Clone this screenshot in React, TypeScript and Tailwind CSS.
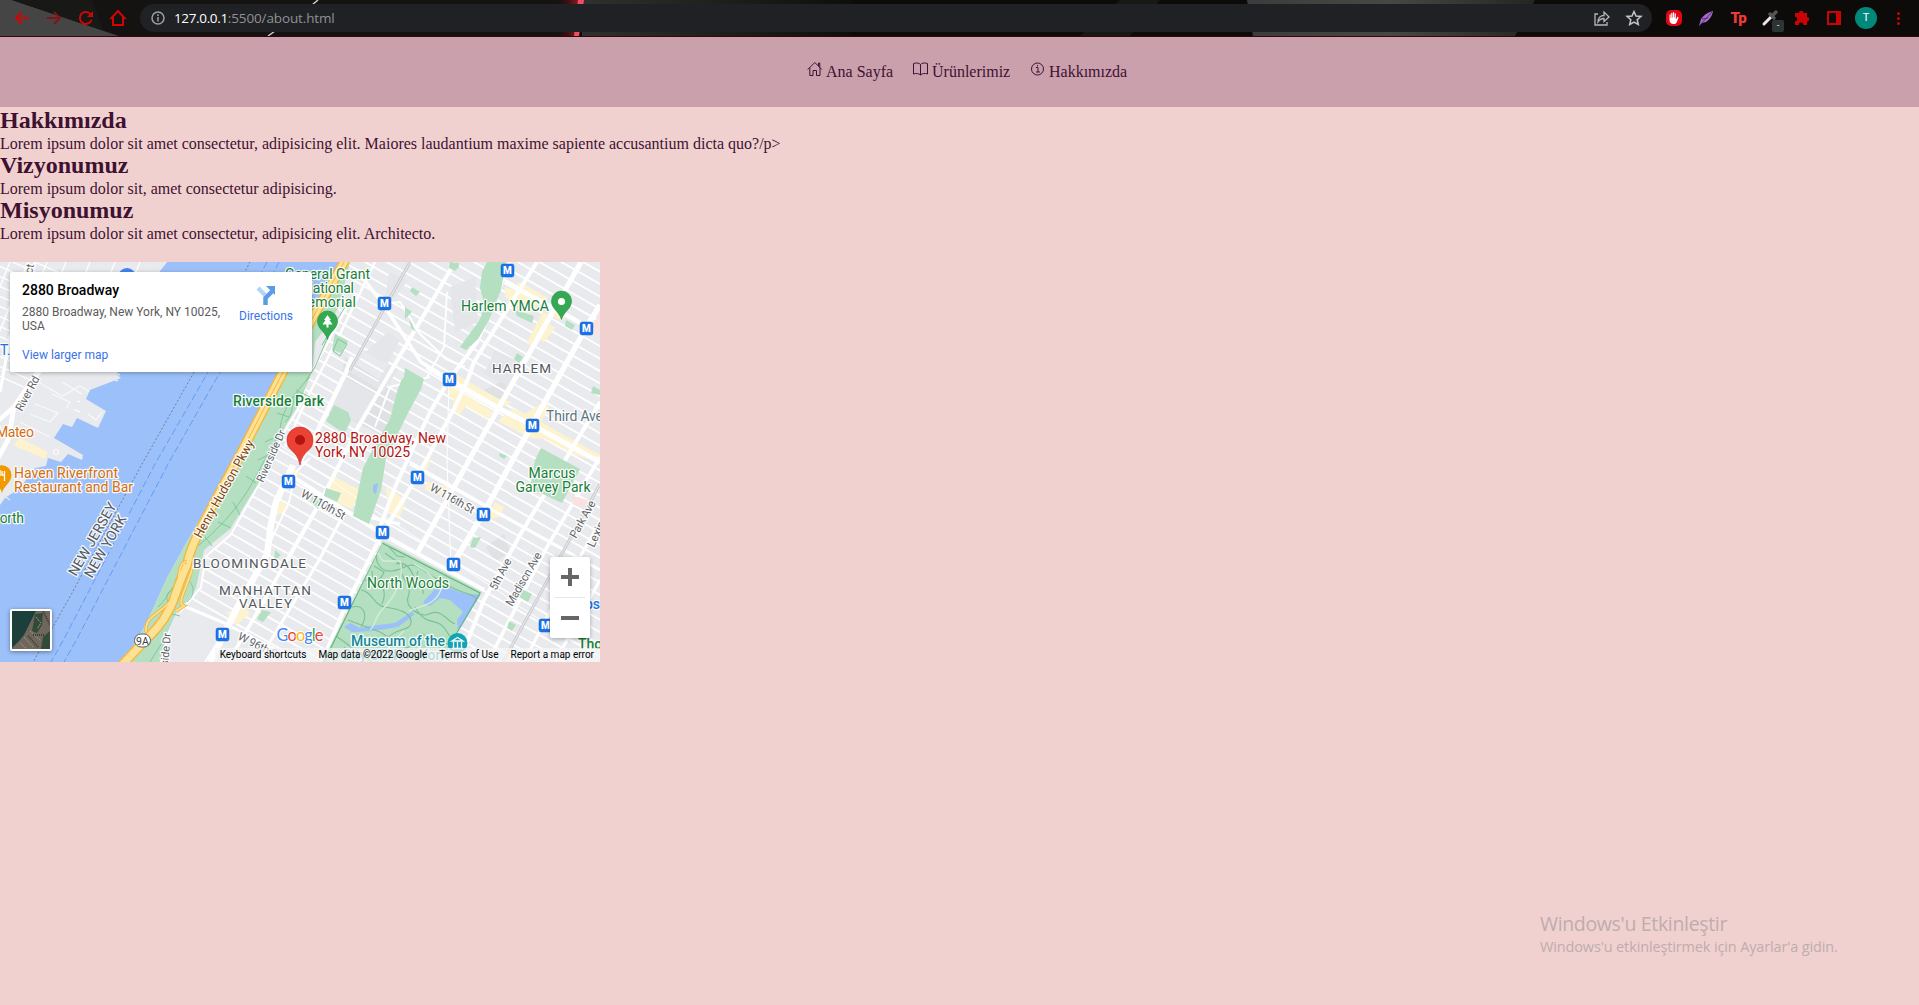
import React from 'react';
import { IoHandLeft } from 'react-icons/io5';

const cityStreets = Array.from({ length: 66 }, (_, i) => -330 + i * 10.8);

const stations: [number, number][] = [
  [384.5, 41.5], [507.5, 8.5], [586.5, 66.5], [449.5, 117.5], [532.5, 163.5], [288.5, 219.5], [417.5, 215.5],
  [483.5, 252.5], [382.5, 270.5], [453.5, 302.5], [344.5, 340.5], [222.5, 372.5], [545.5, 363.5],
];

const avenues: [string, number][] = [
  ['M300 200L318 168L346 110L352 95', 4.5],
  ['M293 203L276 240L271 262L267 293L240 340L210 400', 6.5],
  ['M310 196L296 210L289 240L240 345L205 400', 1.8],
  ['M290 293L322 237L357 167L408 80L455 0', 4],
  ['M322 237L290 293L240 380L228 400', 3.5],
  ['M400 262L345 250L318 300L300 330L258 400', 3],
  ['M322 400L345 345L382 272L417 215L455 145L468 117L474 100L537 0', 4],
  ['M380 265L395 225L430 150L449 118L477 80L487 57L503 17L510 0', 4],
  ['M418 290L468 200L577 7L581 0', 5],
  ['M448 310L483 252L532 163L586 66L600 43', 5.5],
  ['M459 400L484 338L520 273L573 185L600 140', 4],
  ['M492 392L547 285L600 195', 3.5],
  ['M524 400L560 330L600 260', 3],
  ['M555 400L600 318', 3],
  ['M362 15L383 42L421 100L449 118', 3.5],
  ['M383 42L400 40L420 72L446 97L465 105', 2.2],
  ['M447 30L444 85L427 115', 1.8],
  ['M449 118L447 200L451 305', 1],
  ['M350 38L327 80L305 120L300 142L278 178L262 215L230 272L205 294L200 325L184 344L170 360L160 400', 4],
  ['M375 0L340 72L310 130L285 185', 2.5],
  ['M375 165L390 125L430 115', 2],
  ['M270 176L380 252L500 330L520 345L600 395', 1],
  ['M427 105L449 118L500 147L532 163L600 200', 5],
  ['M410 202L600 308', 3],
  ['M290 213L387 275L484 328', 4],
  ['M184 344L222 360L300 400', 3],
  ['M505 20L570 55L600 72', 4.5],
];

function Label({ x, y, size = 14, fill, children, anchor = 'start', rotate = 0, length, weight = 400 }: {
  x: number; y: number; size?: number; fill: string; children: React.ReactNode;
  anchor?: 'start' | 'middle' | 'end'; rotate?: number; length?: number; weight?: number;
}) {
  return (
    <text x={x} y={y} fontSize={size} fill={fill} textAnchor={anchor} fontWeight={weight}
      textLength={length} transform={rotate ? `rotate(${rotate} ${x} ${y})` : undefined}
      stroke="#ffffff" strokeWidth="2.6" strokeOpacity="0.9" strokeLinejoin="round" paintOrder="stroke">
      {children}
    </text>
  );
}

function CityMap() {
  const highway = 'M121 404L157 366C175 345 176 325 187 303C190 285 198 270 240 193L283 110L317 48L347 -5';
  const green = '#188038';
  return (
    <svg width="600" height="400" viewBox="0 0 600 400" className="block" fontFamily="Roboto, sans-serif">
      <defs>
        <clipPath id="manhattan">
          <path d="M342 0H600V400H160L168 370L184 344L200 325L205 294L230 272L262 215L278 178L300 142L305 120L327 80Z" />
        </clipPath>
        <clipPath id="central">
          <path d="M383 280L482 330L440 400H322Z" />
        </clipPath>
      </defs>
      <rect width="600" height="400" fill="#e8eaed" />

      {/* New Jersey streets */}
      <g stroke="#fff" fill="none" strokeWidth="1.3">
        {Array.from({ length: 14 }, (_, i) => <path key={i} d={`M-10 ${-20 + i * 10}L80 ${20 + i * 10}`} />)}
        {[10, 28, 47, 66, 90, 115, 140].map((x) => <path key={x} d={`M${x} 0L${x - 45} 110`} />)}
        <path d="M35 0L25 40L10 75L0 130" strokeWidth="3" />
        <path d="M44 100L14 145L8 178L-4 200M14 145L-3 160" strokeWidth="4.5" />
      </g>
      <path d="M40 108L17 142L10 180L60 190L84 120H125L130 108Z" fill="#e8eaed" />
      <path d="M42 106L14 145L9 176L-2 196" stroke="#fff" strokeWidth="4.5" fill="none" />
      <g stroke="#f8f9fa" fill="none" strokeWidth="1.2">
        <path d="M37 119L62 134L80 124L90 130M62 120L82 132M35 142L58 151L50 160L30 152M52 132L70 140L66 147M20 160L50 175M88 152L96 158L102 150" />
        <circle cx="56" cy="190" r="2.5" />
      </g>
      <path d="M13 183L20 176L48 190L45 197Z" fill="#fdf3cf" />

      {/* Hudson river */}
      <path d="M168 -1L160 9L145 70L116 112L121 116L90 128L86 137L106 149L98 166L77 156L72 165L63 162L54 176L83 193L82 198L68 192L61 200L48 196L46 204L35 206L20 226L5 236L0 243V400H124L147 360L167 316L184 285L197 262L240 190L283 107L315 44L343 -1Z" fill="#9cc0f9" />
      <path d="M101 113L118 119M108 107L120 113M0 231L10 238" stroke="#e8eaed" strokeWidth="1.4" />
      <path d="M252 -4L193 112L142 202L72 331L32 402" stroke="#6c7f9d" strokeWidth="1" strokeDasharray="2 2" fill="none" />
      <path d="M267 0L207 112L155 202L65 375L50 402M279 0L219 112L168 202L78 375L63 402" stroke="#659cf0" strokeWidth="1" strokeDasharray="7 3" fill="none" />

      {/* Upper Manhattan */}
      <g clipPath="url(#manhattan)">
        <g fill="#dfe1e5">
          <path d="M345 95L375 115L410 140L385 175L335 150ZM480 130L510 115L500 140ZM486 285L504 272L510 290L495 300Z" />
        </g>
        <g transform="rotate(29.7 300 200)" stroke="#fff" strokeWidth="1.8">
          {cityStreets.map((y) => <path key={y} d={`M-60 ${y}H690`} />)}
        </g>
        <g fill="#e4e6e9">
          <path d="M388 70L400 78L378 120L350 104ZM365 90L350 110L383 130L398 108ZM343 115L375 132L360 160L330 150ZM450 25L475 15L478 60L455 70ZM495 88L520 100L508 124L484 112ZM389 10L408 18L395 36L386 32Z" />
        </g>
        <g fill="#fdf3cf">
          <path d="M505 25L540 36L533 50L505 35ZM517 20L524 22L548 36L542 40L516 30ZM550 48L566 54L562 58L550 54ZM543 50L550 53L537 83L526 82ZM550 62L555 66L544 80L539 77ZM450 108L472 122L497 136L512 140L500 146L475 133L448 120ZM448 123L470 135L493 150L488 157L448 134ZM512 146L525 152L542 141L550 143L541 160L580 182L600 193V200L575 193L545 177L530 176L498 159ZM454 136L467 142L460 153L452 148ZM440 178L432 188L428 206L420 212ZM335 215L360 228L352 247L325 235ZM495 240L504 245L500 255L485 258ZM386 225L406 238L400 255L388 250ZM290 205L300 210L294 222L280 218ZM275 235L290 246L270 257ZM246 345L250 352L236 363L226 350ZM427 220L450 225L445 234L425 228Z" />
        </g>
        <g fill="none" stroke="#fff" strokeLinejoin="round">
          {avenues.map(([d, w]) => <path key={d} d={d} strokeWidth={w} />)}
        </g>
        <path d="M350 108L370 72L410 0M503 400L552 310L600 222" fill="none" stroke="#c6c9cd" strokeWidth="3" />
        <path d="M350 108L370 72L410 0M503 400L552 310L600 222" fill="none" stroke="#e2e4e7" strokeWidth="1.4" />
      </g>
      <g fill="#b4dfc1">
        <path d="M487 0H506L501 28L489 58L478 77L466 88L460 85L479 59L485 44L480 26L482 10Z" />
        <path d="M405 106L424 117L421 127L408 151L386 196L381 228L369 262L353 254L363 206L374 185L390 157L397 130L401 119L404 115Z" />
        <path d="M541 186L580 207L562 241L530 226L535 198Z" />
        <path d="M334 143L348 150L351 158L345 171L336 166L326 159ZM450 0L459 1L459 5L455 9L449 6ZM412 25L420 30L416 34L410 29ZM405 45L412 50L405 57ZM409 56L416 70L411 66ZM515 48L534 54L532 61L517 54ZM517 91L523 95L519 101L514 97ZM566 58L575 63L572 68L565 64ZM593 124L600 128V133L591 131ZM473 276L481 275L475 286L470 285ZM522 327L532 332L528 340L519 335ZM313 232L322 238L318 247L311 240ZM326 226L341 231L337 240L324 234ZM262 348L271 350L263 360L257 357ZM275 288L281 293L274 299ZM509 359L516 363L512 369L507 366ZM335 72L348 79L341 91L332 88ZM500 191L507 194L504 197L499 194Z" />
        <path d="M350 0L339 45L330 60L315 80L312 110L299 142L286 163L276 185L258 222L230 267L204 288L196 326L188 338L177 349L167 372L160 400H124L147 360L167 316L184 285L197 262L240 190L283 107L315 44L343 0Z" />
        <path d="M383 279L482 330L440 400H322Z" />
      </g>
      <path d="M373 223L378 221L376 232L373 230Z" fill="#9cc0f9" />
      <path d="M594 62L600 50V75L594 71ZM573 234L588 238L583 246L572 242Z" fill="#fbe1df" />
      <g stroke="#84c79b" strokeWidth="1" fill="none">
        <path d="M310 115C295 130 280 150 280 170L250 225C235 250 215 270 198 284M298 130C290 140 295 152 285 160M265 180L278 174M258 198L270 192M246 214L256 221M233 240L240 253M218 260L231 266M205 275L212 284M175 317C180 330 162 326 168 340M185 315C195 323 196 332 187 340M158 345C164 340 168 332 173 325M145 385L159 371M150 400L165 376M160 349L180 354M330 70L315 105L305 120M345 45L322 83M310 135L296 128M277 151L289 155M338 77L347 82L340 94L333 89Z" />
      </g>

      {/* Central Park */}
      <g clipPath="url(#central)">
        <path d="M425 338L435 327L446 325L463 331L482 333L474 352L465 360L463 374L458 371L457 358L463 350L450 338L440 336L430 344L423 341ZM344 365L350 361L360 366L370 364L395 361L410 351L413 349L414 353L398 365L373 369L352 370Z" fill="#9cc0f9" />
        <g fill="none" stroke="#7cc193" strokeWidth="1.1">
          <path d="M377 287C374 300 380 310 392 309C405 308 408 298 420 306C432 314 443 322 455 327C473 335 480 332 475 345L459 373" />
          <path d="M374 304L384 310C379 322 372 320 372 309M365 318C382 319 388 328 382 342M361 328C372 329 374 344 385 345C398 347 410 350 411 359C412 370 396 365 388 376C381 385 382 394 374 400M352 345C365 342 368 354 361 365M348 358L380 370L406 386L420 400M336 374L372 400M403 303C396 315 414 322 408 335C405 345 420 356 429 352C440 346 446 358 455 362M418 309C414 318 425 324 423 332M385 291L403 304M415 345C427 367 438 353 447 370C450 378 459 374 456 388M391 400C398 385 414 388 422 372L457 386M345 385L334 397" />
          <path d="M382 281L480 331L440 400M382 281L324 400" stroke="#64b37e" />
          <path d="M396 302C406 299 411 307 414 315M389 285L397 294L405 295" />
        </g>
        <path d="M378 291L383 299L400 299C405 315 395 335 382 348C375 355 375 364 370 368M414 302L426 309L442 325C435 345 423 342 409 349M404 369L392 380L380 400" fill="none" stroke="#d3edda" strokeWidth="1.4" />
      </g>

      {/* Henry Hudson Parkway */}
      <g fill="none">
        <path d={highway} stroke="#f6b73c" strokeWidth="10" />
        <path d={highway} stroke="#fde293" strokeWidth="7.2" />
        <path d="M197 273L240 193L283 110L317 48L347 -5" stroke="#f6b73c" strokeWidth="1" />
        <path d="M187 300C174 300 184 325 170 340C155 355 145 355 146 370M193 303C190 320 175 342 184 344L176 349" stroke="#f6b73c" strokeWidth="3.4" />
        <path d="M187 300C174 300 184 325 170 340C155 355 145 355 146 370M193 303C190 320 175 342 184 344L176 349" stroke="#fde293" strokeWidth="1.6" />
        <path d="M157 366C175 345 176 325 187 303" stroke="#fde293" strokeWidth="6.5" />
      </g>

      <circle cx="127" cy="15" r="9" fill="#4285f4" />
      {stations.map(([x, y]) => (
        <g key={`${x}-${y}`}>
          <rect x={x - 6.5} y={y - 6.5} width="13" height="13" rx="2.2" fill="#1a73e8" stroke="#1560c4" strokeWidth=".5" />
          <text x={x} y={y + 3.7} textAnchor="middle" fontSize="10" fontWeight="900" fill="#fff">M</text>
        </g>
      ))}

      <Label x={285} y={17} fill={green} length={85}>General Grant</Label>
      <Label x={303} y={31} fill={green} length={51}>National</Label>
      <Label x={295} y={45} fill={green} length={61}>Memorial</Label>
      <Label x={461} y={49} fill={green} length={88}>Harlem YMCA</Label>
      <Label x={233} y={144} fill={green} length={91} weight={500}>Riverside Park</Label>
      <Label x={552} y={216} fill={green} anchor="middle" length={47}>Marcus</Label>
      <Label x={553} y={230} fill={green} anchor="middle" length={75}>Garvey Park</Label>
      <Label x={367} y={326} fill={green} length={82}>North Woods</Label>
      <Label x={-10} y={261} fill={green} length={34}>North</Label>
      <Label x={0} y={93} fill="#1a73e8">T.</Label>
      <Label x={-4} y={175} fill="#d56e0c" length={38}>Mateo</Label>
      <Label x={14} y={216} fill="#d56e0c" length={104}>Haven Riverfront</Label>
      <Label x={14} y={230} fill="#d56e0c" length={119}>Restaurant and Bar</Label>
      <Label x={315} y={181} fill="#b31412" length={131}>2880 Broadway, New</Label>
      <Label x={315} y={195} fill="#b31412" length={95}>York, NY 10025</Label>
      <Label x={492} y={110.500} size={13.500} fill="#55585d" length={59}>HARLEM</Label>
      <Label x={193} y={306} size={13.500} fill="#55585d" length={113}>BLOOMINGDALE</Label>
      <Label x={219} y={333} size={13.500} fill="#55585d" length={92}>MANHATTAN</Label>
      <Label x={239} y={346} size={13.500} fill="#55585d" length={53}>VALLEY</Label>
      <Label x={546} y={159} fill="#5b7582" length={57}>Third Ave</Label>
      <Label x={76} y={315} size={14} fill="#55585d" rotate={-60} length={82}>NEW JERSEY</Label>
      <Label x={92} y={317} size={14} fill="#55585d" rotate={-60} length={70}>NEW YORK</Label>
      <Label x={201} y={277} size={12.500} fill="#7a4510" rotate={-61} length={110}>Henry Hudson Pkwy</Label>
      <Label x={263} y={221} size={11} fill="#5f6368" rotate={-66} length={56}>Riverside Dr</Label>
      <Label x={166} y={427} size={11} fill="#5f6368" rotate={-85} length={56}>Riverside Dr</Label>
      <Label x={22} y={150} size={11.500} fill="#5f6368" rotate={-62} length={38}>River Rd</Label>
      <Label x={32} y={12} size={11} fill="#5f6368" rotate={-78}>ct</Label>
      <Label x={300} y={234} size={11.500} fill="#5f6368" rotate={29} length={49}>W 110th St</Label>
      <Label x={429} y={228} size={11.500} fill="#5f6368" rotate={29} length={49}>W 116th St</Label>
      <Label x={237} y={377} size={11.500} fill="#5f6368" rotate={27} length={46}>W 96th St</Label>
      <Label x={496} y={329} size={11.500} fill="#5f6368" rotate={-62} length={34}>5th Ave</Label>
      <Label x={512} y={345} size={11.500} fill="#5f6368" rotate={-60} length={60}>Madison Ave</Label>
      <Label x={576} y={277} size={11.500} fill="#5f6368" rotate={-61} length={41}>Park Ave</Label>
      <Label x={594} y={286} size={11.500} fill="#5f6368" rotate={-65}>Lexington</Label>
      <Label x={351} y={384} fill="#12879b" length={94} weight={500}>Museum of the</Label>
      <Label x={342} y={398} fill="#12879b" length={106} weight={500}>City of New York</Label>
      <Label x={578} y={387} fill={green} weight={500}>Thomas</Label>
      <Label x={577} y={347} fill="#1a73e8" weight={500}>ops</Label>

      {/* Place markers */}
      <path d="M327.500 77.500C325 69 317.500 67 317.500 59A10 10 0 0 1 337.500 59C337.500 67 330 69 327.500 77.500Z" fill="#34a853" stroke="#1e8e3e" strokeWidth=".6" />
      <path d="M327.500 53L331 58H329.500L332.500 62.500H328.500V65.500H326.500V62.500H322.500L325.500 58H324Z" fill="#fff" />
      <path d="M561.500 57.500C559 49 551.500 47 551.500 39A10 10 0 0 1 571.500 39C571.500 47 564 49 561.500 57.500Z" fill="#34a853" stroke="#1e8e3e" strokeWidth=".6" />
      <circle cx="561.500" cy="39.500" r="3.6" fill="#fff" />
      <path d="M2 231C0 223 -8 221 -8 213A9.700 9.700 0 0 1 11.500 213C11.500 221 4 223 2 231Z" fill="#f29900" />
      <path d="M4.500 209V219M2 209V213H4.500M0 208V214" stroke="#fff" strokeWidth="1.3" fill="none" />
      <path d="M300 203C297 187 287 190 287 178A13 13 0 0 1 313 178C313 190 303 187 300 203Z" fill="#ea4335" stroke="#c5221f" strokeWidth=".6" />
      <circle cx="300" cy="178" r="5" fill="#b31412" />
      <circle cx="457.500" cy="381" r="10" fill="#12a4b4" />
      <path d="M452 379L457.500 375.500L463 379ZM453.500 380V386M457.500 380V386M461.500 380V386M452 386.500H463" stroke="#fff" strokeWidth="1.3" fill="none" />
      <rect x="134.500" y="372" width="16" height="13" rx="6.500" fill="#fff" stroke="#5f6368" />
      <text x="142.500" y="382.500" textAnchor="middle" fontSize="10.500" fill="#3c4043">9A</text>

      <text x="276.500" y="379" fontSize="16.500" fontFamily="Lato, sans-serif" textLength="47" stroke="#fff" strokeWidth="2" paintOrder="stroke">
        <tspan fill="#4285f4">G</tspan><tspan fill="#ea4335">o</tspan><tspan fill="#fbbc04">o</tspan><tspan fill="#4285f4">g</tspan><tspan fill="#34a853">l</tspan><tspan fill="#ea4335">e</tspan>
      </text>
    </svg>
  );
}

function MapFrame() {
  return (
    <section className="relative mt-5 h-[400px] w-[600px] overflow-hidden font-['Roboto',sans-serif]">
      <CityMap />
      <div className="absolute left-[10px] top-[10px] flex h-[100px] w-[302px] rounded-xs bg-white pl-3 pt-[9px] shadow-[0_1px_4px_rgba(0,0,0,0.3)]">
        <div className="w-[209px]">
          <h3 className="text-[14px] font-medium leading-[18px] text-black">2880 Broadway</h3>
          <p className="mt-[6px] whitespace-nowrap text-[12px] leading-[14px] text-[#5b5b5b]">2880 Broadway, New York, NY 10025,<br />USA</p>
          <a className="mt-[15px] block text-[12px] leading-[14px] text-[#3a72e8]">View larger map</a>
        </div>
        <div className="flex flex-1 flex-col items-center pr-[11px] pt-[3px]">
          <svg width="22" height="22" viewBox="0 0 22 22">
            <path d="M3 4L10 11" stroke="#b5d5f8" strokeWidth="4.5" />
            <path d="M10.500 21V14L17 7.500" stroke="#5c9ce6" strokeWidth="4.5" fill="none" />
            <path d="M11 2H20V11Z" fill="#5c9ce6" />
          </svg>
          <a className="mt-[3px] text-[12px] leading-[14px] text-[#3a72e8]">Directions</a>
        </div>
      </div>
      <div className="absolute left-[10px] top-[347px] h-[42px] w-[42px] rounded-xs border-2 border-white bg-[#1d3f3c] shadow-[0_1px_4px_rgba(0,0,0,0.4)]">
        <svg width="38" height="38" viewBox="0 0 38 38">
          <path d="M24 0L20 8L12 24L7 30L0 37V38H38V0Z" fill="#6f675c" />
          <path d="M23 3L31 2L30 14L25 22L20 20ZM31 26L38 20V38H29Z" fill="#314b38" />
          <path d="M24 6L29 12L25 18M12 26L21 36M18 20L29 30M8 32L15 38" stroke="#a19888" fill="none" strokeDasharray="2 1" />
          <path d="M31 0L38 14M16 25L26 36M21 24L32 24" stroke="#3b3c33" fill="none" strokeDasharray="1 1" strokeWidth="2" />
        </svg>
      </div>
      <div className="absolute left-[550px] top-[295px] flex h-[81px] w-10 flex-col items-center rounded-xs bg-white shadow-[0_1px_4px_rgba(0,0,0,0.3)]">
        <div className="flex h-[41px] w-[30px] items-center justify-center border-b border-[#e6e6e6]">
          <svg width="18" height="18"><path d="M0 9H18M9 0V18" stroke="#666" strokeWidth="4" /></svg>
        </div>
        <div className="flex h-10 items-center"><div className="h-1 w-[18px] bg-[#666]" /></div>
      </div>
      <div className="absolute bottom-0 right-0 flex h-[14px] items-center gap-[12px] whitespace-nowrap bg-[#f5f5f5]/75 pl-[5px] pr-[6px] text-[10px] leading-[14px] text-black">
        <span>Keyboard shortcuts</span><span>Map data ©2022 Google</span><span>Terms of Use</span><span>Report a map error</span>
      </div>
    </section>
  );
}

function BrowserBar() {
  return (
    <header className="relative h-[37px] border-b border-[#3a0505] bg-[#0c0b0a]">
      <svg className="absolute inset-0" width="1919" height="36" preserveAspectRatio="none">
        <defs>
          <linearGradient id="panel" x1="0" x2="1"><stop stopColor="#3c3c3c" /><stop offset=".5" stopColor="#474745" /><stop offset="1" stopColor="#252524" /></linearGradient>
          <linearGradient id="glow" x1="0" x2="1"><stop stopColor="#330000" stopOpacity="0" /><stop offset="1" stopColor="#8c1c25" /></linearGradient>
          <linearGradient id="mid" x1="0" x2="1"><stop stopColor="#30302f" /><stop offset="1" stopColor="#0e0e0d" /></linearGradient>
        </defs>
        <rect x="90" width="490" height="36" fill="#141312" />
        <path d="M12 0L119 36H0V0Z" fill="#454545" />
        <path d="M92 0L103 30L119 36L12 0Z" fill="#181817" />
        <path d="M318 0L312 5M275 31L268 36" stroke="#ccc" strokeWidth="1.5" />
        <rect x="555" width="24" height="36" fill="url(#glow)" />
        <rect x="582" width="270" height="36" fill="url(#mid)" />
        <path d="M578 0H584L579 36H574Z" fill="#f14c65" />
        <path d="M1120 0H1160L1130 36H1080Z" fill="#181817" />
        <path d="M1247 0H1535L1515 36H1253Z" fill="url(#panel)" />
      </svg>
      <div className="relative flex h-9 items-center">
        <div className="flex w-[140px] items-center gap-[12px] pl-[12px] text-[#ce0606]">
          <svg width="20" height="20" fill="none" stroke="currentColor" strokeWidth="2"><path d="M17 10H4M10 4L4 10L10 16" /></svg>
          <svg width="20" height="20" fill="none" stroke="#811414" strokeWidth="2"><path d="M3 10H16M10 4L16 10L10 16" /></svg>
          <svg width="20" height="20" fill="none" stroke="currentColor" strokeWidth="2"><path d="M15.500 12A6 6 0 1 1 14 5.600L16 8" /><path d="M17 3V9H11Z" fill="currentColor" stroke="none" /></svg>
          <svg width="20" height="20" fill="none" stroke="currentColor" strokeWidth="2"><path d="M3.500 10L10 3L16.500 10H15V17H5V10Z" /></svg>
        </div>
        <div className="flex h-7 w-[1512px] items-center rounded-full bg-[#202124] pl-[11px] pr-[9px]">
          <svg width="14" height="14" fill="none" stroke="#9aa0a6" strokeWidth="1.5"><circle cx="7" cy="7" r="6" /><path d="M7 6V10.500M7 3.300V4.900" /></svg>
          <span className="ml-[9px] flex-1 whitespace-nowrap font-['Open_Sans',sans-serif] text-[13.500px] leading-5 text-[#8d9195]"><span className="tracking-[-0.35px] text-white">127.0.0.1</span><span className="tracking-[-0.13px]">:5500/about.html</span></span>
          <svg width="18" height="18" fill="none" stroke="#b5b7ba" strokeWidth="1.3" className="mr-[14px]"><path d="M5 5H2V16H14V13M5 13C5 8 8 6.500 11 6.500V3L16 8L11 12.500V9.500C8 9.500 6.500 10.500 5 13Z" /></svg>
          <svg width="18" height="18" viewBox="0 0 18 18" fill="none" stroke="#c4c6c8" strokeWidth="1.5"><path d="M9 2.500L11 7L16 7.400L12.200 10.700L13.300 15.500L9 13L4.700 15.500L5.800 10.700L2 7.400L7 7Z" /></svg>
        </div>
        <div className="flex items-center pl-[6px]">
          <div className="flex w-8 justify-center">
            <div className="flex h-4 w-4 items-center justify-center rounded-[5px] bg-[#e30613]"><IoHandLeft size={12} color="#fff" /></div>
          </div>
          <div className="flex w-8 justify-center">
            <svg width="18" height="18"><path d="M2 17L4 10Q8 4 16 2Q15 9 9 13L5 14Z" fill="#a66bc8" /><path d="M2 17L15 3M5 10L11 9" stroke="#582a83" strokeWidth="1" /></svg>
          </div>
          <div className="w-8 text-center font-['Roboto',sans-serif] text-[15px] font-black leading-5 tracking-[-1.200px] text-[#f03a37]">Tp</div>
          <div className="relative flex w-8 justify-center">
            <svg width="18" height="18" fill="none" strokeLinecap="round"><path d="M3 15L10 8" stroke="#e8e8e8" strokeWidth="3" /><path d="M9 5L13 9M11 7L15 3" stroke="#555" strokeWidth="3.500" /></svg>
            <div className="absolute left-[18px] top-[11px] flex h-[12px] w-[12px] items-center justify-center rounded-xs bg-[#2c3436] text-[8px] text-white">-</div>
          </div>
          <div className="flex w-8 justify-center text-[#c90404]">
            <svg width="16" height="16" fill="currentColor"><path d="M1 3H5A2.200 2.200 0 0 1 9.400 3H13V7A2.200 2.200 0 0 1 13 11.400V15H9.500A2.400 2.400 0 0 0 4.700 15H1V11.500A2.400 2.400 0 0 0 1 6.700Z" /></svg>
          </div>
          <div className="flex w-8 justify-center"><div className="h-[14px] w-[14px] border-2 border-r-[5px] border-[#c90404]" /></div>
          <div className="flex w-8 justify-center">
            <div className="h-[22px] w-[22px] rounded-full bg-[#00897b] text-center font-['Roboto',sans-serif] text-[11px] leading-[22px] text-white">T</div>
          </div>
          <div className="flex w-8 flex-col items-center gap-[2px]">
            <i className="h-[3px] w-[3px] rounded-full bg-[#c90404]" /><i className="h-[3px] w-[3px] rounded-full bg-[#c90404]" /><i className="h-[3px] w-[3px] rounded-full bg-[#c90404]" />
          </div>
        </div>
      </div>
    </header>
  );
}

const sections = [
  ['Hakkımızda', 'Lorem ipsum dolor sit amet consectetur, adipisicing elit. Maiores laudantium maxime sapiente accusantium dicta quo?/p>'],
  ['Vizyonumuz', 'Lorem ipsum dolor sit, amet consectetur adipisicing.'],
  ['Misyonumuz', 'Lorem ipsum dolor sit amet consectetur, adipisicing elit. Architecto.'],
];

export default function App() {
  return (
    <div className="relative h-[1005px] w-[1919px] overflow-hidden bg-[#f1d1d0] font-['Liberation_Serif','Times_New_Roman',serif] text-[16px] text-[#3f1130]">
      <BrowserBar />
      <nav className="flex h-[70px] bg-[#caa0ad] pl-[807px] pt-[24px] leading-[22px]">
        <a className="flex w-[105px] gap-[3px]">
          <svg width="16" height="16" fill="none" stroke="currentColor" strokeWidth="1" className="shrink-0"><path d="M.8 8.500L7.800 1.500L14.800 8.500M11.500 5V2H12.800V6.500M2.800 6.800V14.500H6V9.500H9.500V14.500H13V6.800" /></svg>
          <span>Ana Sayfa</span>
        </a>
        <a className="flex w-[118px] gap-[3px]">
          <svg width="17" height="16" fill="none" stroke="currentColor" strokeWidth="1" className="shrink-0"><path d="M8.500 3.500C7.500 2 4 1.500 1.500 2.500V13C4 12 7 12.500 8.500 14C10 12.500 13 12 15.500 13V2.500C13 1.500 9.500 2 8.500 3.500V14" /></svg>
          <span>Ürünlerimiz</span>
        </a>
        <a className="flex gap-[3px]">
          <svg width="16" height="16" fill="none" stroke="currentColor" strokeWidth="1" className="shrink-0"><circle cx="7.500" cy="8" r="6" /><path d="M6 6.500H8V11M6 11H10M7.500 4V5.300" /></svg>
          <span>Hakkımızda</span>
        </a>
      </nav>
      <main>
        {sections.map(([title, text]) => (
          <section key={title}>
            <h2 className="text-[24px] font-bold leading-[27px]">{title}</h2>
            <p className="h-[18px] leading-[20px]">{text}</p>
          </section>
        ))}
        <MapFrame />
      </main>
      <div className="absolute left-[1540px] top-[911px] whitespace-nowrap font-['Open_Sans',sans-serif] text-[#bdadad]">
        <div className="text-[19.500px] leading-[26px] tracking-[-0.34px]">Windows'u Etkinleştir</div>
        <div className="text-[14.500px] leading-[20px] tracking-[-0.14px]">Windows'u etkinleştirmek için Ayarlar'a gidin.</div>
      </div>
    </div>
  );
}
